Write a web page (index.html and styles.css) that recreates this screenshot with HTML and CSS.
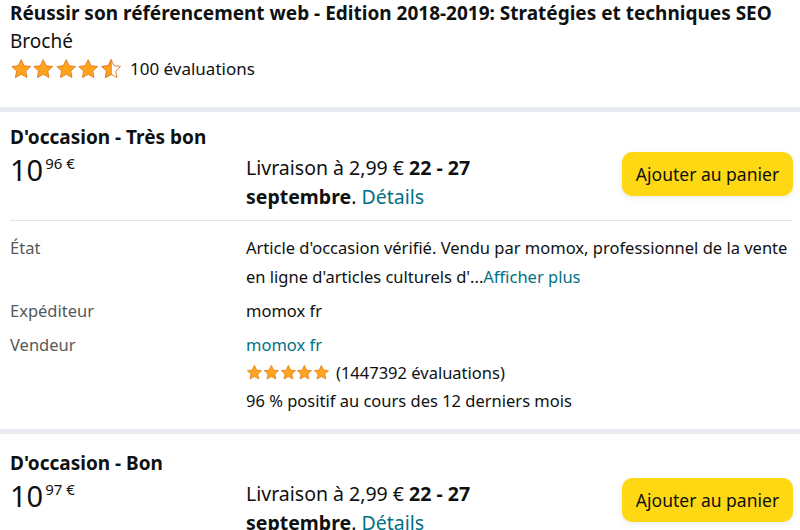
FILE: index.html
```html
<!DOCTYPE html>
<html lang="fr">
<head>
<meta charset="utf-8">
<link rel="stylesheet" href="styles.css">
</head>
<body>
<svg width="0" height="0" class="defs">
  <defs>
    <symbol id="star" viewBox="0 0 24 24">
      <path d="M12 1.8l3.1 6.6 7.1.9-5.2 4.9 1.3 7.1L12 17.8l-6.3 3.5L7 14.2 1.8 9.3l7.1-.9z" fill="#FFA41C" stroke="#DE7921" stroke-width="1" stroke-linejoin="round"/>
    </symbol>
    <symbol id="halfstar" viewBox="0 0 24 24">
      <path d="M12 1.8l3.1 6.6 7.1.9-5.2 4.9 1.3 7.1L12 17.8l-6.3 3.5L7 14.2 1.8 9.3l7.1-.9z" fill="#fff" stroke="#DE7921" stroke-width="1" stroke-linejoin="round"/>
      <path d="M12 1.8V17.8l-6.3 3.5L7 14.2 1.8 9.3l7.1-.9z" fill="#FFA41C" stroke="#DE7921" stroke-width="1" stroke-linejoin="round"/>
    </symbol>
  </defs>
</svg>

<header class="product">
  <h1 class="title">Réussir son référencement web - Edition 2018-2019: Stratégies et techniques SEO</h1>
  <div class="format">Broché</div>
  <div class="rating">
    <span class="stars big">
      <svg><use href="#star"/></svg><svg><use href="#star"/></svg><svg><use href="#star"/></svg><svg><use href="#star"/></svg><svg><use href="#halfstar"/></svg>
    </span>
    <span class="count">100 évaluations</span>
  </div>
</header>

<div class="band"></div>

<section class="offer">
  <h2 class="condition">D'occasion - Très bon</h2>
  <div class="buy">
    <div class="price"><span class="whole">10</span><span class="frac">96 €</span></div>
    <div class="delivery">Livraison à 2,99 € <b>22 - 27 septembre</b>. <a class="link">Détails</a></div>
    <div class="action"><button class="cart">Ajouter au panier</button></div>
  </div>
  <hr class="rule">
  <dl class="details">
    <dt>État</dt>
    <dd>Article d'occasion vérifié. Vendu par momox, professionnel de la vente en ligne d'articles culturels d'...<a class="link">Afficher plus</a></dd>
    <dt>Expéditeur</dt>
    <dd>momox fr</dd>
    <dt>Vendeur</dt>
    <dd>
      <div class="seller"><a class="link">momox fr</a></div>
      <div class="seller-rating">
        <span class="stars small">
          <svg><use href="#star"/></svg><svg><use href="#star"/></svg><svg><use href="#star"/></svg><svg><use href="#star"/></svg><svg><use href="#star"/></svg>
        </span>
        <span>(1447392 évaluations)</span>
      </div>
      <div>96 % positif au cours des 12 derniers mois</div>
    </dd>
  </dl>
</section>

<div class="band"></div>

<section class="offer next">
  <h2 class="condition">D'occasion - Bon</h2>
  <div class="buy">
    <div class="price"><span class="whole">10</span><span class="frac">97 €</span></div>
    <div class="delivery">Livraison à 2,99 € <b>22 - 27 septembre</b>. <a class="link">Détails</a></div>
    <div class="action"><button class="cart">Ajouter au panier</button></div>
  </div>
</section>
</body>
</html>
```
FILE: styles.css
```css
* { box-sizing: border-box; }
html, body {
  margin: 0;
  padding: 0;
  background: #fff;
  color: #0F1111;
  font-family: "Noto Sans", "Open Sans", Arial, sans-serif;
  font-size: 16px;
  overflow: hidden;
}
.defs { position: absolute; width: 0; height: 0; }

.product { padding: 1px 7px 25px 10px; }
.title {
  margin: 0;
  font-size: 19px;
  font-weight: 700;
  line-height: 25px;
}
.format { font-size: 19px; line-height: 30px; }
.rating { display: flex; align-items: center; gap: 8px; height: 26px; }
.stars { display: inline-flex; }
.stars.big svg { width: 22.4px; height: 22px; }
.stars.small svg { width: 16.8px; height: 17px; }
.count { font-size: 17px; line-height: 24px; }

.band { height: 5px; background: #E7EAEE; }

.offer { padding: 12px 7px 0 10px; }
.offer.next { padding-top: 16px; }
.condition {
  margin: 0;
  font-size: 19px;
  font-weight: 700;
  line-height: 26px;
}
.buy {
  display: grid;
  grid-template-columns: 236px 1fr 171px;
  align-items: start;
}
.price { display: flex; align-items: flex-start; padding-top: 3px; }
.whole { font-size: 29px; line-height: 34px; }
.frac { font-size: 15px; line-height: 20px; margin-left: 2px; }
.delivery {
  font-size: 19.5px;
  line-height: 29px;
  padding-top: 3px;
  max-width: 250px;
}
.delivery b { font-weight: 700; }
.link { color: #007185; text-decoration: none; }
.action { padding-top: 2px; }
.cart {
  width: 171px;
  height: 44px;
  border: 0;
  border-radius: 10px;
  background: #FFD814;
  color: #0F1111;
  font-family: inherit;
  font-size: 17.5px;
  box-shadow: 0 2px 5px rgba(213, 217, 217, .5);
}
.rule {
  margin: 9px 0 0 0;
  border: 0;
  border-top: 1px solid #E3E6E6;
}
.details {
  margin: 0;
  padding: 12px 0 14px;
  display: grid;
  grid-template-columns: 236px 1fr;
  row-gap: 5px;
  font-size: 16.5px;
  line-height: 29px;
}
.details dt { color: #565959; }
.details dd { margin: 0; }
.seller-rating { display: flex; align-items: center; gap: 6px; line-height: 27px; }
```
